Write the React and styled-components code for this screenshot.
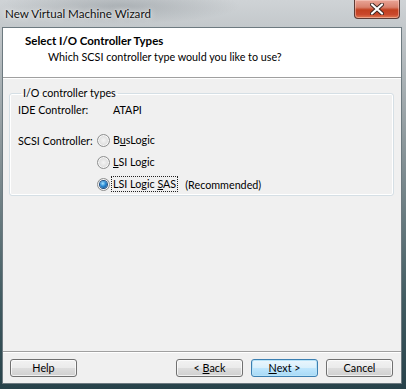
import React from "react";
import styled, { createGlobalStyle, css } from "styled-components";

const FONT = `"Lato", "Liberation Sans", sans-serif`;
const FS = "10.75px";

const Global = createGlobalStyle`
  html, body { margin: 0; padding: 0; }
  body { width: 406px; height: 389px; overflow: hidden; font-family: ${FONT}; }
`;

const Frame = styled.div`
  position: relative;
  width: 406px;
  height: 389px;
  box-sizing: border-box;
  padding: 27px 4px 5px 2px;
  display: flex;
  flex-direction: column;
  background:
    radial-gradient(ellipse 120px 18px at 120px 6px, rgba(110,118,124,0.35), rgba(110,118,124,0) 100%),
    linear-gradient(to bottom, #cfd3d6 0px, #c3c8cb 28px, #8d989c 140px, #415b61 300px, #27424a 100%);
`;

const TitleBar = styled.div`
  position: absolute;
  left: 0;
  top: 0;
  right: 0;
  height: 27px;
  display: flex;
  align-items: center;
  padding-left: 5px;
`;

const TitleText = styled.span`
  font-family: ${FONT};
  font-size: 11.6px;
  color: #101010;
  text-shadow: 0 0 6px rgba(255,255,255,0.9), 0 0 2px rgba(255,255,255,0.8);
`;

const CloseButton = styled.div`
  position: absolute;
  left: 354px;
  top: 0;
  width: 46px;
  height: 19px;
  box-sizing: border-box;
  border: 1px solid #5c3a34;
  border-top: none;
  border-radius: 0 0 4px 4px;
  background: linear-gradient(to bottom, #e9a597 0%, #d9816d 40%, #c2401f 55%, #c9472b 80%, #e07a52 100%);
  box-shadow: inset 0 0 0 1px rgba(255,220,210,0.45);
  display: flex;
  align-items: center;
  justify-content: center;
`;

const Client = styled.div`
  flex: 1;
  display: flex;
  flex-direction: column;
  border: 1px solid #6d7a80;
  background: #f0f0f0;
`;

const Header = styled.div`
  height: 50px;
  box-sizing: border-box;
  background: #ffffff;
  border-bottom: 1px solid #a0a0a0;
  box-shadow: 0 1px 0 #ffffff;
  padding: 5px 0 0 22px;
  display: flex;
  flex-direction: column;
`;

const HeaderTitle = styled.div`
  font-size: 11.5px;
  font-weight: 700;
  color: #000;
  line-height: 15px;
`;

const HeaderSub = styled.div`
  font-size: ${FS};
  color: #000;
  line-height: 15px;
  padding-left: 23px;
  margin-top: 1px;
`;

const Body = styled.div`
  flex: 1;
  padding: 8px 7px 0 6px;
`;

const Group = styled.fieldset`
  margin: 0;
  padding: 1px 8px 10px 8px;
  height: 110px;
  box-sizing: border-box;
  border: 1px solid #d5dfe5;
  border-radius: 3px;
  box-shadow: inset 0 0 0 1px #ffffff;
`;

const Legend = styled.legend`
  font-size: ${FS};
  color: #000;
  padding: 0 2px;
  margin-left: 3px;
  line-height: 14px;
`;

const Grid = styled.div`
  display: grid;
  grid-template-columns: 79px 1fr;
  grid-template-rows: 19px 31px 22px 22px;
  align-items: end;
  font-size: ${FS};
  color: #000;
`;

const Cell = styled.div`
  height: 22px;
  display: flex;
  align-items: center;
  white-space: nowrap;
  grid-column: ${(p) => p.$col || "auto"};
  ${(p) => p.$indent && css`padding-left: 16px;`}
`;

const RadioCircle = styled.span`
  width: 13px;
  height: 13px;
  box-sizing: border-box;
  border-radius: 50%;
  border: 1px solid #8e8f8f;
  background: radial-gradient(circle at 50% 50%, #f4f4f4 0, #e2e2e2 50%, #c9c9c9 100%);
  box-shadow: inset 0 0 0 1px #f8f8f8;
  display: flex;
  align-items: center;
  justify-content: center;
  flex-shrink: 0;
`;

const RadioDot = styled.span`
  width: 7px;
  height: 7px;
  border-radius: 50%;
  background: radial-gradient(circle at 40% 35%, #a8e4ff 0, #2a8ad4 45%, #0b3f7a 100%);
  box-shadow: 0 0 0 1px #1e4f85;
`;

const OptionText = styled.span`
  margin-left: 1px;
  padding: 0 1px;
  line-height: 14px;
  border: 1px dotted transparent;
  ${(p) => p.$focused && css`border-color: #222;`}
`;

const Note = styled.span`
  margin-left: 7px;
`;

const U = styled.span`
  text-decoration: underline;
`;

const Footer = styled.div`
  height: 32px;
  box-sizing: border-box;
  border-top: 1px solid #a0a0a0;
  box-shadow: inset 0 1px 0 #ffffff;
  display: flex;
  align-items: center;
  padding: 0 8px 0 7px;
`;

const Button = styled.button`
  width: 67px;
  height: 18px;
  box-sizing: border-box;
  padding: 0;
  font-family: ${FONT};
  font-size: ${FS};
  color: #000;
  border: 1px solid #707070;
  border-radius: 3px;
  background: linear-gradient(to bottom, #f2f2f2 0%, #ebebeb 48%, #dddddd 52%, #cfcfcf 100%);
  box-shadow: inset 0 0 0 1px rgba(255,255,255,0.7);
  display: flex;
  align-items: center;
  justify-content: center;
  margin-left: ${(p) => p.$gap || 0}px;
  ${(p) =>
    p.$default &&
    css`
      border-color: #3c7fb1;
      background: linear-gradient(to bottom, #eaf6fd 0%, #d9f0fc 48%, #bee6fd 52%, #a7d9f5 100%);
      box-shadow: inset 0 0 0 1px #b8e3f8;
    `}
`;

const Push = styled.div`
  flex: 1;
`;

function Radio({ checked }) {
  return <RadioCircle>{checked && <RadioDot />}</RadioCircle>;
}

export default function App() {
  return (
    <>
      <Global />
      <Frame>
        <TitleBar>
          <TitleText>New Virtual Machine Wizard</TitleText>
        </TitleBar>
        <CloseButton>
          <svg width="14" height="12" viewBox="0 0 14 12">
            <path d="M2 1.5 L12 10.5 M12 1.5 L2 10.5" stroke="#3a2420" strokeWidth="4" strokeLinecap="round" />
            <path d="M2 1.5 L12 10.5 M12 1.5 L2 10.5" stroke="#ffffff" strokeWidth="2.2" strokeLinecap="round" />
          </svg>
        </CloseButton>
        <Client>
          <Header>
            <HeaderTitle>Select I/O Controller Types</HeaderTitle>
            <HeaderSub>Which SCSI controller type would you like to use?</HeaderSub>
          </Header>
          <Body>
            <Group>
              <Legend>I/O controller types</Legend>
              <Grid>
                <Cell>IDE Controller:</Cell>
                <Cell $indent>ATAPI</Cell>
                <Cell>SCSI Controller:</Cell>
                <Cell>
                  <Radio />
                  <OptionText>
                    B<U>u</U>sLogic
                  </OptionText>
                </Cell>
                <Cell $col={2}>
                  <Radio />
                  <OptionText>
                    <U>L</U>SI Logic
                  </OptionText>
                </Cell>
                <Cell $col={2}>
                  <Radio checked />
                  <OptionText $focused>
                    LSI Logic <U>S</U>AS
                  </OptionText>
                  <Note>(Recommended)</Note>
                </Cell>
              </Grid>
            </Group>
          </Body>
          <Footer>
            <Button>Help</Button>
            <Push />
            <Button>
              &lt;&nbsp;<U>B</U>ack
            </Button>
            <Button $default $gap={8}>
              <U>N</U>ext &gt;
            </Button>
            <Button $gap={8}>Cancel</Button>
          </Footer>
        </Client>
      </Frame>
    </>
  );
}
